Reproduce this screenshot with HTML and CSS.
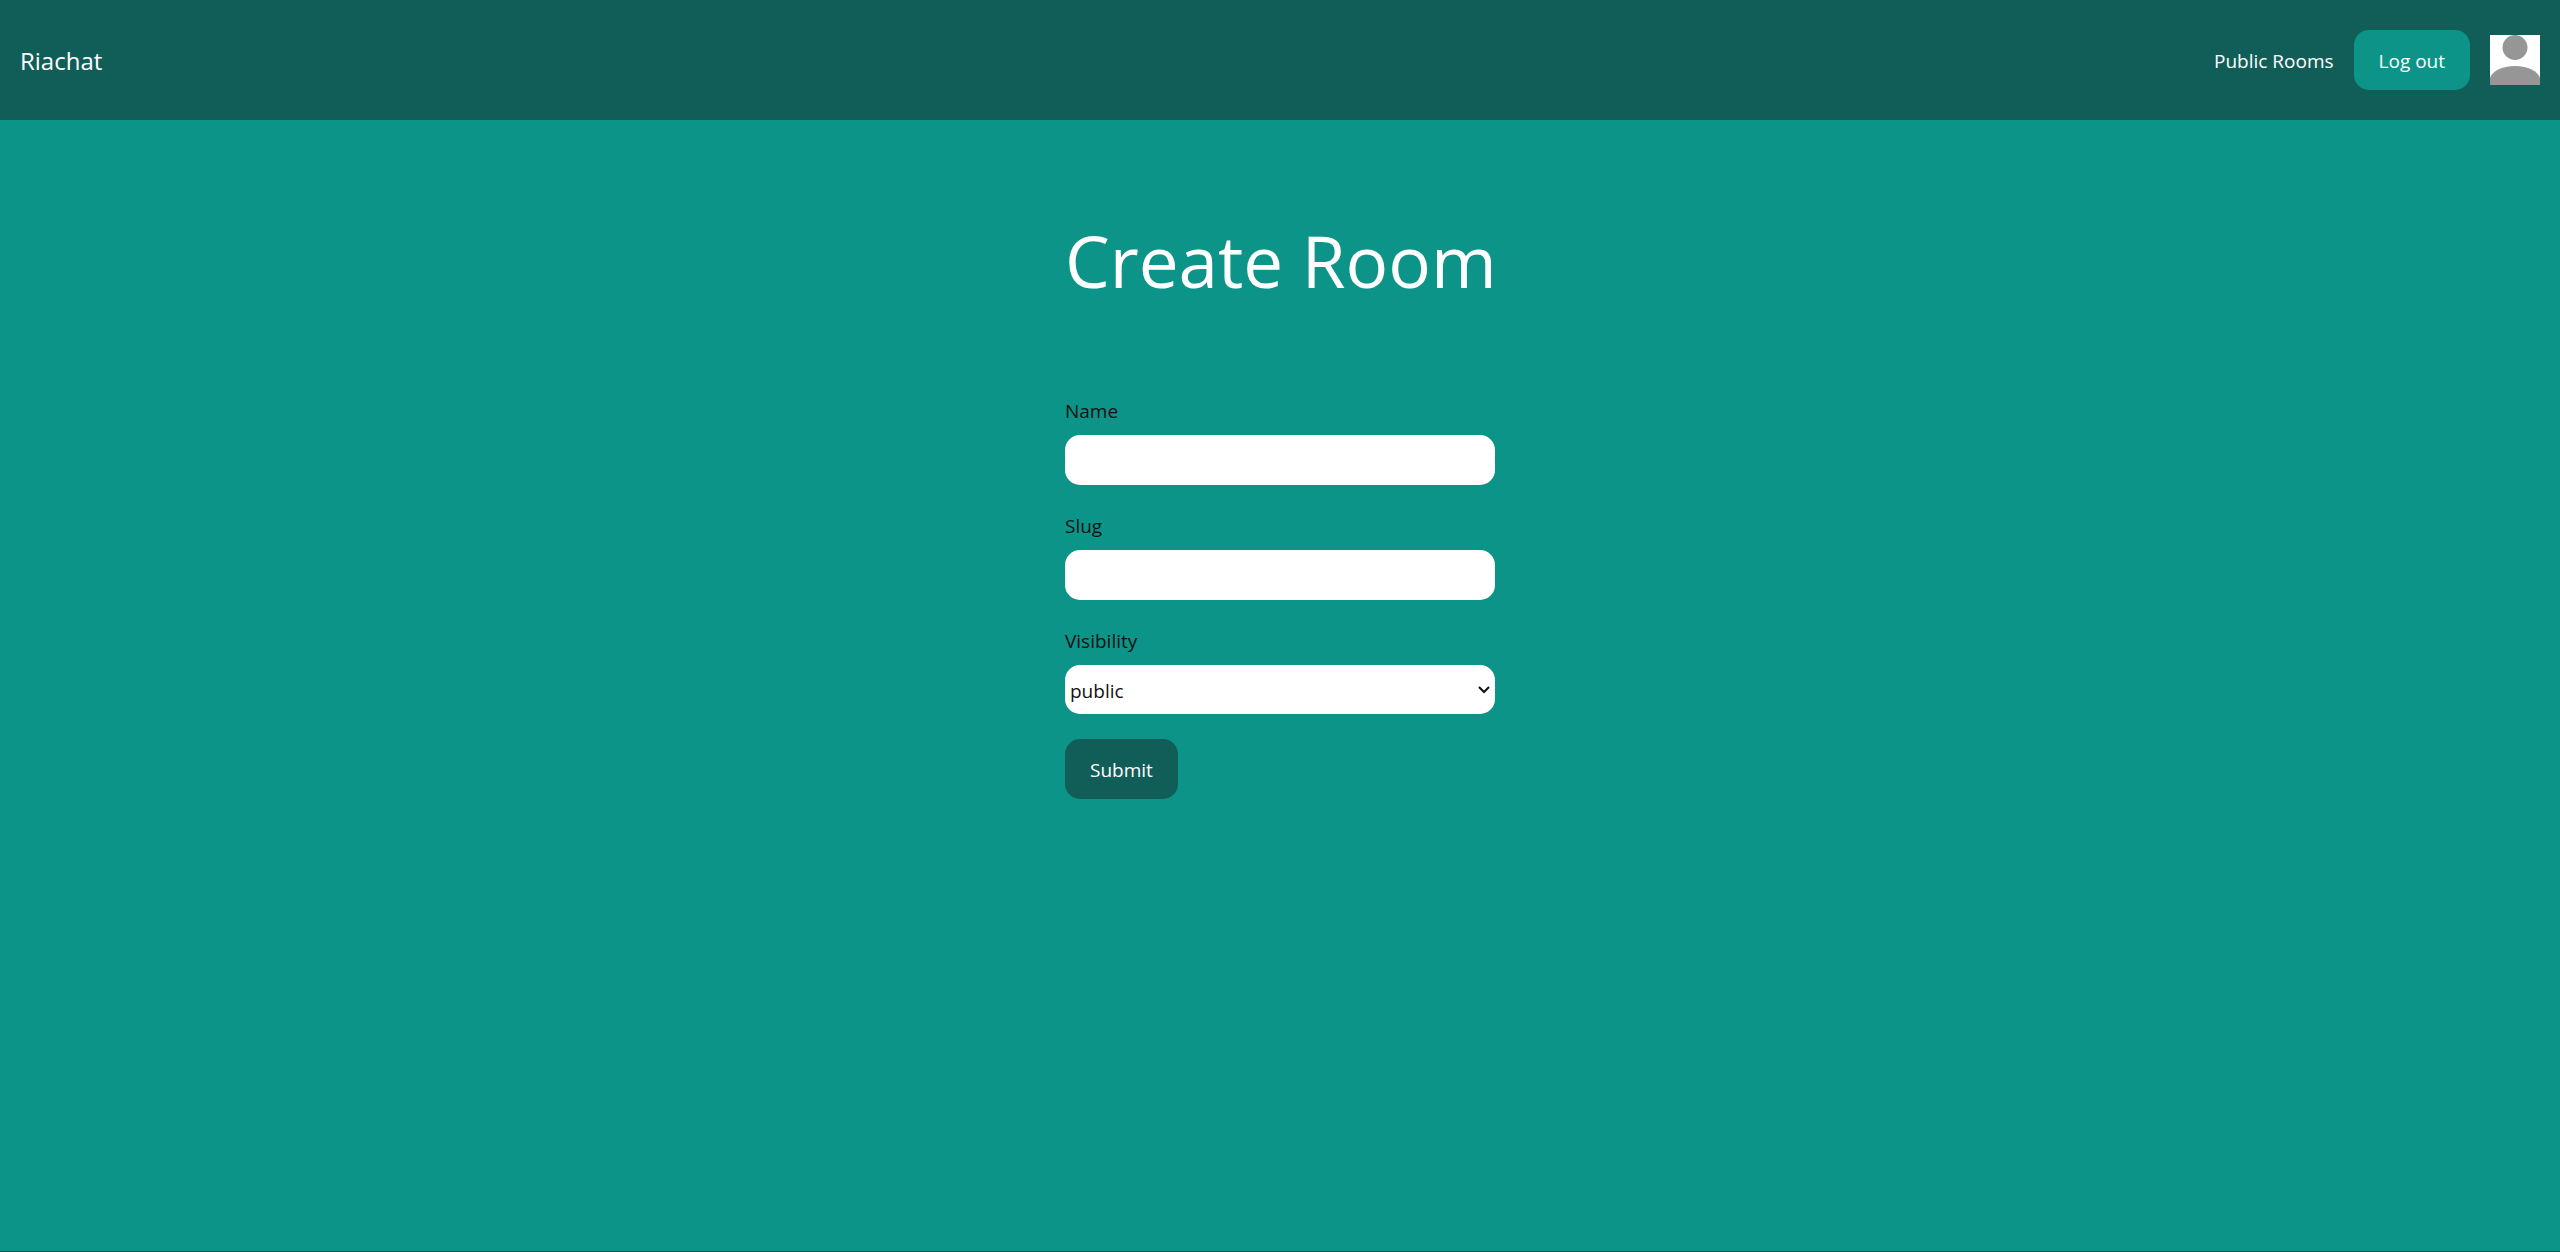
FILE: index.html
```html
<!DOCTYPE html>
<html lang="en">
<head>
  <meta charset="utf-8">
  <meta name="viewport" content="width=device-width, initial-scale=1">
  <title>Create Room - Riachat</title>
  <link rel="stylesheet" href="styles.css">
</head>
<body>
  <header class="navbar">
    <a class="brand" href="#">Riachat</a>
    <nav class="nav">
      <a class="nav-link" href="#">Public Rooms</a>
      <button class="button button-light" type="button">Log out</button>
      <svg class="avatar" viewBox="0 0 50 50" role="img" aria-label="Profile picture">
        <rect width="50" height="50" fill="#fff"/>
        <circle cx="25" cy="12.5" r="12.5" fill="#969696"/>
        <path d="M0 50V43C2 36.500 12 31 25 31S48 36.500 50 43V50Z" fill="#969696"/>
      </svg>
    </nav>
  </header>
  <main class="page">
    <div class="panel">
      <h1 class="title">Create Room</h1>
      <form class="form">
        <div class="field">
          <label for="name">Name</label>
          <input class="control" id="name" type="text">
        </div>
        <div class="field">
          <label for="slug">Slug</label>
          <input class="control" id="slug" type="text">
        </div>
        <div class="field">
          <label for="visibility">Visibility</label>
          <select class="control select" id="visibility">
            <option>public</option>
            <option>private</option>
          </select>
        </div>
        <button class="button button-dark" type="submit">Submit</button>
      </form>
    </div>
  </main>
</body>
</html>
```
FILE: styles.css
```css
* {
  box-sizing: border-box;
}

body {
  display: flex;
  flex-direction: column;
  min-height: 100vh;
  margin: 0;
  border-bottom: 1px solid #134e4a;
  background: #0d9488;
  color: #111;
  font-family: "Segoe UI", "Open Sans", sans-serif;
  font-size: 19px;
  line-height: 32px;
}

.navbar {
  display: flex;
  align-items: center;
  justify-content: space-between;
  padding: 30px 20px;
  background: #115e59;
}

.brand,
.nav-link {
  padding-top: 2px;
  color: #fff;
  text-decoration: none;
}

.brand {
  font-size: 24px;
}

.nav {
  display: flex;
  align-items: center;
  gap: 20px;
}

.avatar {
  display: block;
  width: 50px;
  height: 50px;
}

.button {
  padding: 15px 25px 13px;
  border: 0;
  border-radius: 15px;
  color: #fff;
  font: inherit;
  cursor: pointer;
}

.button-light {
  background: #0d9488;
}

.button-dark {
  background: #115e59;
}

.page {
  display: flex;
  justify-content: center;
  padding: 100px 20px;
}

.panel {
  width: 100%;
  max-width: 430px;
}

.title {
  margin: 0 0 94px;
  color: #fff;
  font-size: 71px;
  font-weight: 400;
  line-height: 81px;
  white-space: nowrap;
}

.form {
  display: flex;
  flex-direction: column;
  align-items: flex-start;
  gap: 25px;
}

.field {
  display: flex;
  flex-direction: column;
  gap: 8px;
  width: 100%;
}

.control {
  width: 100%;
  height: 50px;
  padding: 0 5px;
  border: 0;
  border-radius: 15px;
  background: #fff;
  color: #111;
  font: inherit;
}

.select {
  height: 49px;
  padding-top: 2px;
  appearance: none;
  background: #fff url("data:image/svg+xml,%3Csvg xmlns='http://www.w3.org/2000/svg' width='12' height='8'%3E%3Cpath d='M1 1L6 6L11 1' fill='none' stroke='%23111' stroke-width='2'/%3E%3C/svg%3E") no-repeat right 5px center;
}
```
